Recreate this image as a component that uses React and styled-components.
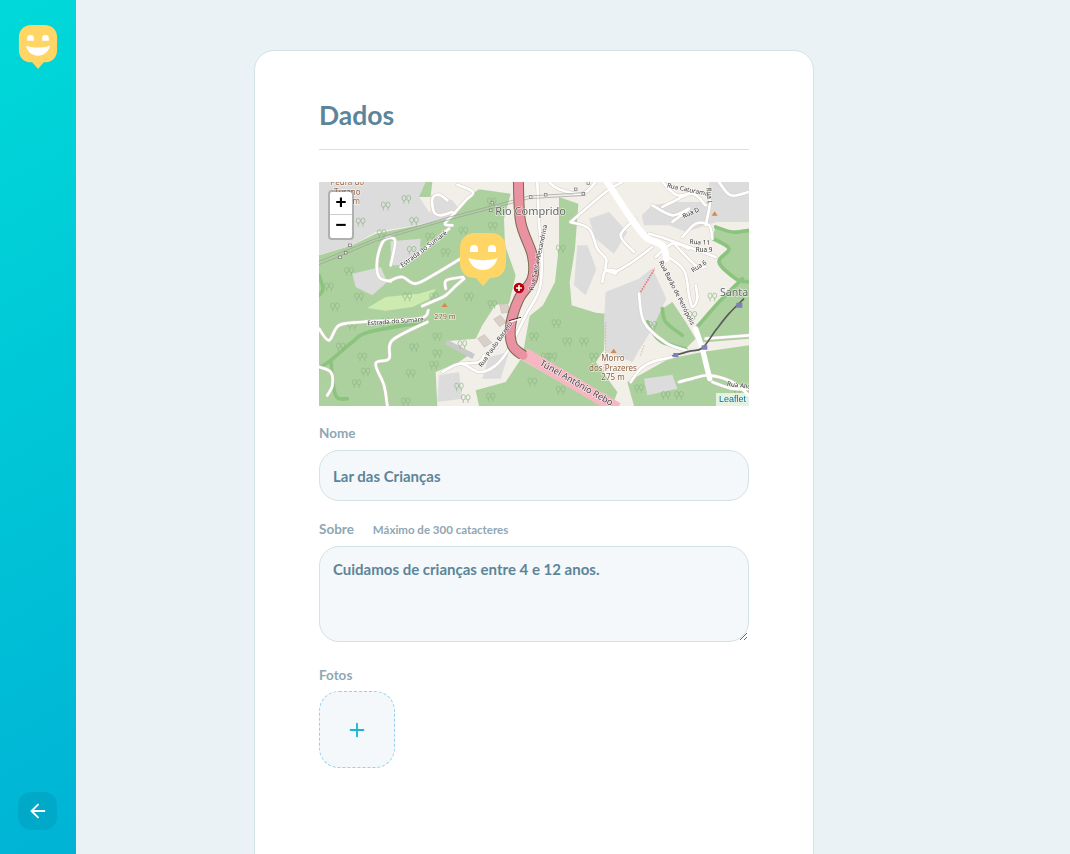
import React from "react";
import styled, { createGlobalStyle } from "styled-components";
import { FiArrowLeft, FiPlus } from "react-icons/fi";

const GlobalStyle = createGlobalStyle`
  * {
    margin: 0;
    padding: 0;
    box-sizing: border-box;
  }

  body {
    background: #ebf2f5;
    font-family: "Lato", "Open Sans", sans-serif;
    overflow: hidden;
  }
`;

const Page = styled.div`
  display: flex;
  height: 100vh;
  overflow: hidden;
`;

const Sidebar = styled.aside`
  display: flex;
  flex-direction: column;
  align-items: center;
  justify-content: space-between;
  width: 76px;
  flex-shrink: 0;
  padding: 25px 1px 24px 0;
  background: linear-gradient(329.54deg, #00b3d5 0%, #00d9d9 100%);
`;

const BackButton = styled.button`
  display: flex;
  align-items: center;
  justify-content: center;
  width: 39px;
  height: 38px;
  border: 0;
  border-radius: 13px;
  background: #00a9c8;
  color: #fff;
`;

const Main = styled.main`
  flex: 1;
  padding: 50px 178px 0;
`;

const Card = styled.form`
  width: 560px;
  min-height: 900px;
  padding: 40px 64px 0;
  background: #fff;
  border: 1px solid #d3e2e5;
  border-radius: 20px;
`;

const Title = styled.h1`
  height: 59px;
  border-bottom: 1px solid #d3e2e5;
  color: #5c8599;
  font-size: 26.5px;
  font-weight: 700;
  line-height: 48px;
`;

const MapBox = styled.div`
  position: relative;
  height: 224px;
  margin-top: 32px;
  overflow: hidden;
  background: #f2efe9;
`;

const Tiles = styled.svg`
  display: block;
  width: 430px;
  height: 224px;
`;

const ZoomControl = styled.div`
  position: absolute;
  top: 8px;
  left: 9px;
  width: 26px;
  border: 2px solid rgba(0, 0, 0, 0.2);
  border-radius: 4px;
  background: #fff;
  background-clip: padding-box;
  overflow: hidden;
`;

const ZoomButton = styled.div`
  height: 23px;
  color: #000;
  font-family: "Liberation Mono", monospace;
  font-size: 19px;
  font-weight: 700;
  line-height: 23px;
  text-align: center;
  border-bottom: ${(p) => (p.$last ? "0" : "1px solid #ccc")};
`;

const Attribution = styled.div`
  position: absolute;
  right: 0;
  bottom: 0;
  padding: 0 3px;
  background: rgba(255, 255, 255, 0.7);
  color: #0078a8;
  font-family: "Liberation Sans", sans-serif;
  font-size: 9px;
  line-height: 13px;
`;

const Field = styled.div`
  margin-top: ${(p) => p.$top}px;
`;

const Label = styled.label`
  display: flex;
  align-items: baseline;
  gap: 19px;
  margin-bottom: ${(p) => p.$gap || 8}px;
  color: #8fa7b3;
  font-size: 13.5px;
  font-weight: 700;
  line-height: 16px;

  span {
    font-size: 11.5px;
  }
`;

const Input = styled.input`
  display: block;
  width: 100%;
  height: 51px;
  padding: 0 13px;
  background: #f5f8fa;
  border: 1px solid #d3e2e5;
  border-radius: 20px;
  outline: none;
  color: #5c8599;
  font-family: inherit;
  font-size: 15px;
  font-weight: 700;
`;

const TextArea = styled.textarea`
  display: block;
  width: 100%;
  height: 96px;
  padding: 13px;
  background: #f5f8fa;
  border: 1px solid #d3e2e5;
  border-radius: 20px;
  outline: none;
  color: #5c8599;
  font-family: inherit;
  font-size: 15px;
  font-weight: 700;
  line-height: 18px;
`;

const UploadBox = styled.div`
  display: flex;
  align-items: center;
  justify-content: center;
  width: 76px;
  height: 77px;
  background: #f5f8fa;
  border: 1px dashed #96d2f0;
  border-radius: 20px;
  color: #15b6d6;
`;

const Smiley = ({ width, height, className }) => (
  <svg className={className} width={width} height={height} viewBox="0 0 46 53">
    <path
      d="M15 0h16c9 0 15 6 15 15v15c0 9-6 15-15 15h-1l-7 8-7-8h-1C6 45 0 39 0 30V15C0 6 6 0 15 0z"
      fill="#ffd666"
    />
    <path d="M10 19v-3a4 4 0 0 1 8 0v3zM28 19v-3a4 4 0 0 1 8 0v3z" fill="#fff" />
    <path d="M8.500 25c8 3 21 3 29 0-2 8-8 12-14.500 12S10.500 33 8.500 25z" fill="#fff" />
  </svg>
);

const Pin = styled(Smiley)`
  position: absolute;
  left: 141px;
  top: 51px;
`;

// catmull-rom through the points, the map is drawn in 3x reference coords
const smooth = (pts) => {
  const at = (i) => pts[Math.max(0, Math.min(pts.length - 1, i))];
  let d = `M${pts[0][0]} ${pts[0][1]}`;
  for (let i = 0; i < pts.length - 1; i++) {
    const [p0, p1, p2, p3] = [at(i - 1), at(i), at(i + 1), at(i + 2)];
    const c1 = [p1[0] + (p2[0] - p0[0]) / 6, p1[1] + (p2[1] - p0[1]) / 6];
    const c2 = [p2[0] - (p3[0] - p1[0]) / 6, p2[1] - (p3[1] - p1[1]) / 6];
    d += `C${c1[0]} ${c1[1]} ${c2[0]} ${c2[1]} ${p2[0]} ${p2[1]}`;
  }
  return d;
};

const poly = (pts) => "M" + pts.map((p) => p.join(" ")).join("L") + "z";

const GREY = [
  [[0, 0], [320, 0], [300, 45], [330, 90], [405, 105], [290, 130], [170, 150], [100, 190], [0, 218]],
  [[335, 40], [400, 55], [420, 80], [400, 105], [335, 90]],
  [[215, 178], [305, 170], [300, 225], [245, 250], [215, 250]],
  [[100, 275], [185, 255], [205, 300], [160, 340], [110, 315]],
  [[810, 110], [870, 90], [925, 150], [885, 215], [830, 170]],
  [[775, 190], [805, 190], [832, 262], [800, 340], [765, 310]],
  [[860, 330], [960, 290], [1000, 258], [1042, 350], [1000, 440], [960, 505], [940, 540], [860, 510], [855, 420]],
  [[1000, 70], [1060, 60], [1170, 60], [1170, 0], [1290, 0], [1290, 120], [1190, 120], [1100, 150], [1050, 130], [975, 130], [968, 100]],
  [[510, 525], [570, 510], [545, 590], [490, 590]],
  [[360, 580], [420, 570], [430, 650], [355, 660]],
  [[975, 590], [1060, 578], [1075, 620], [985, 640]],
];

const FOREST = [
  [[0, 220], [100, 190], [170, 155], [300, 130], [400, 105], [440, 50], [480, 22], [575, 35], [555, 110], [558, 190], [590, 280], [570, 365], [530, 368], [490, 430], [470, 470], [380, 478], [460, 512], [420, 540], [350, 570], [355, 672], [0, 672]],
  [[300, 0], [340, 0], [335, 45], [300, 45]],
  [[720, 45], [778, 65], [768, 200], [752, 300], [758, 370], [830, 392], [860, 395], [855, 505], [830, 540], [880, 610], [895, 630], [880, 672], [845, 650], [610, 525], [632, 402], [672, 370], [708, 300], [720, 190]],
  [[480, 672], [470, 625], [560, 600], [605, 532], [850, 672]],
  [[1190, 130], [1240, 150], [1290, 145], [1290, 300], [1250, 290], [1200, 240], [1230, 200], [1180, 170]],
  [[985, 420], [1030, 380], [1060, 360], [1100, 420], [1130, 470], [1100, 500], [1030, 480], [1000, 450]],
  [[1130, 440], [1200, 360], [1290, 272], [1290, 470], [1140, 482]],
  [[925, 600], [1050, 530], [1150, 510], [1290, 490], [1290, 672], [945, 672]],
];

const WOOD_EDGES = [
  [[1190, 135], [1240, 150], [1290, 145]],
  [[1182, 170], [1230, 200], [1200, 240], [1250, 290], [1290, 300]],
  [[985, 420], [1000, 450], [1030, 480], [1100, 500]],
  [[1030, 380], [1040, 420], [1090, 460]],
  [[1130, 440], [1200, 360], [1270, 290]],
  [[0, 558], [35, 535], [100, 480], [150, 450], [320, 420]],
  [[35, 535], [50, 640], [85, 650]],
  [[0, 280], [12, 320], [0, 340]],
];

const ROADS = [
  [[400, 130], [378, 125], [405, 95], [440, 55], [462, 30], [415, 8]],
  [[385, 55], [360, 38], [340, 50], [345, 90], [365, 100], [400, 90]],
  [[390, 140], [300, 215], [245, 255]],
  [[215, 250], [228, 175], [195, 175], [175, 230], [180, 285], [215, 298]],
  [[215, 295], [250, 285], [290, 305], [350, 275], [425, 230]],
  [[380, 320], [382, 295], [432, 285]],
  [[310, 372], [350, 355], [380, 340], [410, 312], [435, 290]],
  [[0, 440], [30, 475], [60, 430], [130, 420], [300, 410], [328, 385]],
  [[325, 420], [220, 475], [210, 530], [170, 545], [195, 610], [205, 672]],
  [[0, 555], [35, 570], [40, 610], [25, 640]],
  [[370, 570], [425, 545], [480, 570], [530, 550], [570, 500], [620, 400], [662, 320], [668, 220], [660, 120], [655, 0]],
  [[425, 545], [480, 540], [495, 520]],
  [[755, 120], [860, 30], [910, 0]],
  [[755, 120], [810, 140], [835, 200], [862, 232], [860, 262], [890, 275]],
  [[950, 110], [905, 160], [945, 210]],
  [[890, 270], [940, 240], [1000, 195]],
  [[990, 155], [1040, 170], [1095, 190], [1190, 225]],
  [[1010, 225], [1060, 185], [1110, 200]],
  [[1040, 220], [1095, 265], [1110, 340], [1120, 375], [1135, 350], [1130, 310]],
  [[1070, 190], [1130, 250], [1160, 255]],
  [[1090, 165], [1130, 125], [1170, 130], [1180, 170]],
  [[1030, 75], [1060, 60], [1120, 35], [1160, 70]],
  [[1000, 70], [1060, 100], [1110, 80], [1060, 120]],
  [[690, 0], [720, 22], [790, 35], [830, 0]],
  [[960, 335], [975, 420], [1040, 482], [1100, 505]],
  [[895, 268], [860, 265], [850, 300]],
  [[1080, 600], [1120, 590], [1170, 580], [1240, 600], [1290, 640]],
  [[1180, 600], [1240, 620], [1290, 620]],
  [[1160, 470], [1290, 460]],
  [[935, 600], [965, 560], [1000, 540], [1060, 525]],
  [[1170, 30], [1172, 70], [1160, 130]],
  [[1030, 0], [1075, 40], [1130, 28]],
  [[1200, 0], [1235, 40], [1290, 30]],
];

const TREES = [
  [200, 72], [262, 52], [125, 120], [285, 118], [188, 155], [278, 205], [380, 212], [333, 165], [433, 147],
  [521, 133], [518, 60], [90, 268], [30, 315], [120, 345], [265, 345], [345, 345], [450, 345], [520, 367],
  [48, 375], [100, 432], [200, 420], [285, 497], [355, 465], [355, 515], [345, 550], [275, 575], [140, 570],
  [113, 605], [65, 495], [130, 525], [260, 660], [430, 488], [420, 615], [440, 650], [515, 645], [645, 465],
  [712, 425], [745, 480], [725, 201], [700, 525], [680, 525], [640, 600], [725, 625], [790, 625], [825, 525],
  [795, 480], [1000, 430], [1180, 345], [1120, 400], [960, 620], [1255, 625], [1040, 640], [1080, 640],
];

const LABELS = [
  ["Rio Comprido", 635, 100, 0, 33, "#666"],
  ["Santa", 1245, 343, 0, 32, "#666"],
  ["Pedra do", 85, 8, 0, 24, "#9a6a4a"],
  ["Turano", 85, 38, 0, 24, "#9a6a4a"],
  ["m", 112, 66, 0, 24, "#9a6a4a"],
  ["Morro", 882, 537, 0, 24, "#8b5f3f"],
  ["dos Prazeres", 882, 566, 0, 24, "#8b5f3f"],
  ["275 m", 882, 595, 0, 24, "#8b5f3f"],
  ["279 m", 378, 411, 0, 22, "#8b5f3f"],
  ["Estrada do Sumaré", 318, 206, -37, 19, "#333"],
  ["Estrada do Sumaré", 230, 424, -4, 19, "#333"],
  ["Rua Santa Alexandrina", 664, 228, -78, 19, "#333"],
  ["Rua Paulo Barreto", 535, 490, -55, 19, "#333"],
  ["Túnel Antônio Rebo", 768, 610, 30, 27, "#444"],
  ["Rua Caturama", 1105, 29, 12, 19, "#333"],
  ["Rua L", 1165, 42, 85, 19, "#333"],
  ["Rua D", 1118, 98, -25, 19, "#333"],
  ["Rua 11", 1142, 187, 3, 19, "#333"],
  ["Rua 9", 1155, 209, 0, 19, "#333"],
  ["Rua 6", 1143, 258, -33, 19, "#333"],
  ["Rua Barão de Petrópolis", 1068, 335, 63, 19, "#333"],
  ["Rua Alic", 1258, 616, 8, 19, "#333"],
];

const PYLONS = [
  [63, 226], [80, 212], [93, 190], [515, 85], [520, 62], [635, 45], [680, 38], [793, 35], [770, 22], [808, 3],
];

const MOTORWAY = [[598, -10], [605, 120], [640, 220], [640, 290], [600, 350], [575, 430], [580, 490], [612, 520]];

const Tree = ({ x, y }) => (
  <g transform={`translate(${x} ${y})`} fill="none" stroke="#8db583" strokeWidth="2">
    <ellipse cx="-7" cy="-4" rx="6" ry="8" />
    <ellipse cx="7" cy="-4" rx="6" ry="8" />
    <path d="M-7 3v10M7 3v10" />
  </g>
);

const MapTiles = () => (
  <Tiles viewBox="0 0 1290 672">
    <filter id="soft">
      <feGaussianBlur stdDeviation="0.900" />
    </filter>
    <g filter="url(#soft)">
      <rect width="1290" height="672" fill="#f2efe9" />
      {FOREST.map((p, i) => (
        <path key={i} d={poly(p)} fill="#add19e" />
      ))}
      {GREY.map((p, i) => (
        <path key={i} d={poly(p)} fill="#dcdcdc" />
      ))}
      <path d={poly([[145, 378], [200, 345], [300, 335], [350, 320], [330, 352], [280, 375], [200, 386]])} fill="#cdebb0" />
      <g fill="none" stroke="#8cc47f" strokeWidth="11" strokeLinecap="round">
        {WOOD_EDGES.map((p, i) => (
          <path key={i} d={smooth(p)} />
        ))}
      </g>
      <g fill="#d9d0c9" stroke="#bdb2a8" strokeWidth="1.500">
        <path d="M542 368l24-4 6 26-24 4zM524 412l20-12 18 20-20 14zM476 470l20-12 22 24-22 14z" />
      </g>
      <path d="M382 480l82 44" stroke="#c9c9c9" strokeWidth="16" />
      {TREES.map(([x, y], i) => (
        <Tree key={i} x={x} y={y} />
      ))}

      <g fill="none" stroke="#d4ccc4" strokeWidth="11" strokeLinecap="round" strokeLinejoin="round">
        {ROADS.map((p, i) => (
          <path key={i} d={smooth(p)} />
        ))}
      </g>
      <g fill="none" stroke="#fff" strokeWidth="8" strokeLinecap="round" strokeLinejoin="round">
        {ROADS.map((p, i) => (
          <path key={i} d={smooth(p)} />
        ))}
        <path d={smooth([[865, 0], [930, 100], [980, 165], [1030, 190], [1042, 230]])} strokeWidth="20" />
        <path d="M1130 440l20 60 22 90" strokeWidth="16" />
      </g>

      <g fill="none" stroke="#9a9a9a" strokeWidth="2">
        <path d="M0 238L170 170L380 108L630 42L800 32" />
        <path d="M0 248L170 178L380 116L630 50L800 40" />
      </g>
      <g fill="#f2efe9" stroke="#777" strokeWidth="2">
        {PYLONS.map(([x, y], i) => (
          <rect key={i} x={x - 4} y={y - 4} width="8" height="8" />
        ))}
      </g>

      <path d={smooth([[1060, 522], [1110, 508], [1150, 498], [1190, 445], [1230, 395], [1275, 350]])} fill="none" stroke="#5a5a5a" strokeWidth="5" />
      <path d="M1063 513h15v12h-15zM1148 490h17v13h-17zM1252 362h18v15h-18z" fill="#7b80b8" />
      <path d="M965 330l42-70" stroke="#f0787c" strokeWidth="5" strokeDasharray="5 3" />
      <path d="M965 520l10-30M860 420v100l-8 60" fill="none" stroke="#d8a8a8" strokeWidth="2.500" strokeDasharray="5 4" />

      <path d="M615 515L895 680" stroke="#f6b7c3" strokeWidth="38" />
      <path d={smooth(MOTORWAY)} fill="none" stroke="#7a6a4c" strokeWidth="33" />
      <path d={smooth(MOTORWAY)} fill="none" stroke="#e892a2" strokeWidth="27" strokeLinecap="round" />

      <path d="M570 416l36-10" stroke="#333" strokeWidth="3" />
      <path d="M572 420l34-10" stroke="#fff" strokeWidth="4" />

      <circle cx="600" cy="318" r="16" fill="#b8000f" />
      <path d="M591 318h18M600 309v18" stroke="#fff" strokeWidth="5" />

      <path d="M368 375l9-13 9 13zM875 513l9-13 9 13zM1178 101l9-13 9 13z" fill="#d68748" />

      {LABELS.map(([text, x, y, r, size, color]) => (
        <text
          key={text + x}
          x={x}
          y={y}
          transform={`rotate(${r} ${x} ${y})`}
          fontFamily="Noto Sans, sans-serif"
          fontSize={size}
          fill={color}
          textAnchor="middle"
          stroke="#fff"
          strokeOpacity="0.65"
          strokeWidth="4"
          paintOrder="stroke"
        >
          {text}
        </text>
      ))}
    </g>
  </Tiles>
);

export default function App() {
  return (
    <>
      <GlobalStyle />
      <Page>
        <Sidebar>
          <Smiley width={40} height={44} />
          <BackButton type="button">
            <FiArrowLeft size={22} />
          </BackButton>
        </Sidebar>
        <Main>
          <Card>
            <Title>Dados</Title>
            <MapBox>
              <MapTiles />
              <ZoomControl>
                <ZoomButton>+</ZoomButton>
                <ZoomButton $last>−</ZoomButton>
              </ZoomControl>
              <Pin width={46} height={53} />
              <Attribution>Leaflet</Attribution>
            </MapBox>
            <Field $top={19}>
              <Label $gap={9}>Nome</Label>
              <Input readOnly value="Lar das Crianças" />
            </Field>
            <Field $top={20}>
              <Label>
                Sobre <span>Máximo de 300 catacteres</span>
              </Label>
              <TextArea readOnly value="Cuidamos de crianças entre 4 e 12 anos." />
            </Field>
            <Field $top={25}>
              <Label>Fotos</Label>
              <UploadBox>
                <FiPlus size={22} />
              </UploadBox>
            </Field>
          </Card>
        </Main>
      </Page>
    </>
  );
}
